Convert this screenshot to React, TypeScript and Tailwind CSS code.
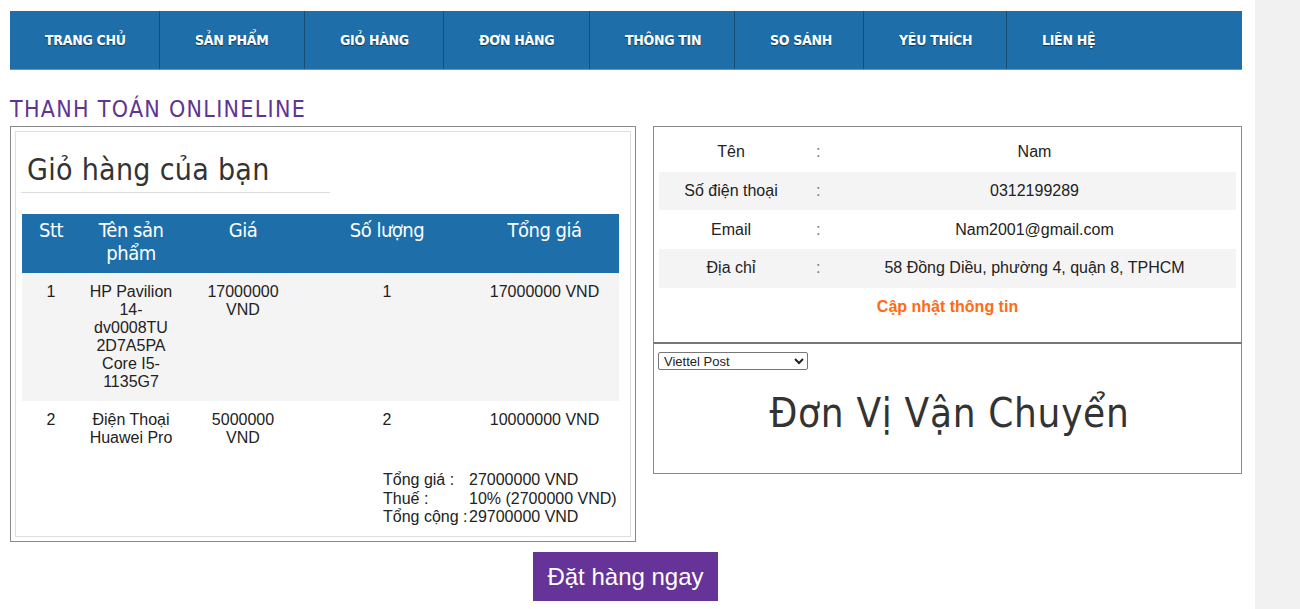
import React from "react";

const navItems = [
  { label: "TRANG CHỦ", w: "w-[150px]" },
  { label: "SẢN PHẨM", w: "w-[145px]" },
  { label: "GIỎ HÀNG", w: "w-[139px]" },
  { label: "ĐƠN HÀNG", w: "w-[146px]" },
  { label: "THÔNG TIN", w: "w-[145px]" },
  { label: "SO SÁNH", w: "w-[129px]" },
  { label: "YÊU THÍCH", w: "w-[143px]" },
  { label: "LIÊN HỆ", w: "w-[120px]" },
];

const info = [
  { k: "Tên", v: "Nam" },
  { k: "Số điện thoại", v: "0312199289" },
  { k: "Email", v: "Nam2001@gmail.com" },
  { k: "Địa chỉ", v: "58 Đồng Diều, phường 4, quận 8, TPHCM" },
];

export default function App() {
  return (
    <div className="flex min-h-[609px] bg-white font-['Liberation_Sans',Arial,sans-serif] text-[#222]">
      <div className="w-[1255px] pl-[10px] pt-[11px]">
        {/* nav */}
        <nav className="flex h-[59px] w-[1232px] bg-[#1e6fa9] border-b border-[#5b9ac8]">
          {navItems.map((n, i) => (
            <div
              key={n.label}
              className={`${n.w} flex items-center pl-[35px] pt-[1px] text-[14px] font-bold text-white [text-shadow:0_1px_1px_rgba(0,0,0,0.5)] font-['DejaVu_Sans_Condensed','DejaVu_Sans',sans-serif] tracking-[-0.3px] ${
                i < navItems.length - 1 ? "border-r border-[#164e78]" : ""
              }`}
            >
              {n.label}
            </div>
          ))}
        </nav>

        <h1 className="mt-[26px] text-[23px] leading-[26px] text-[#5e3591] font-['DejaVu_Sans_Condensed','DejaVu_Sans',sans-serif] tracking-[1.3px]">
          THANH TOÁN ONLINELINE
        </h1>

        <div className="flex gap-[17px] mt-[4px] items-start">
          {/* left */}
          <div className="w-[626px] h-[416px] border border-[#8a8a8a] p-[4px]">
            <div className="h-full border border-[#dedede] px-[5px] pt-[20px]">
              <h2 className="text-[30px] leading-[36px] text-[#333] pl-[6px] font-['DejaVu_Sans_Condensed','DejaVu_Sans',sans-serif] font-light tracking-[0.3px] w-[309px] pb-[4px] border-b border-[#dddddd]">
                Giỏ hàng của bạn
              </h2>
              <table className="mt-[21px] ml-[1px] w-[597px] border-collapse text-[16px] leading-[18px] table-fixed">
                <thead>
                  <tr className="bg-[#1e6fa9] text-white text-[20px] leading-[23px] font-['DejaVu_Sans_Condensed','Liberation_Sans',sans-serif] tracking-[-0.5px]">
                    <th className="w-[58px] font-normal align-top pt-[5px] pb-[8px]">Stt</th>
                    <th className="w-[102px] font-normal align-top pt-[5px] pb-[8px]">Tên sản phẩm</th>
                    <th className="w-[122px] font-normal align-top pt-[5px]">Giá</th>
                    <th className="w-[166px] font-normal align-top pt-[5px]">Số lượng</th>
                    <th className="font-normal align-top pt-[5px]">Tổng giá</th>
                  </tr>
                </thead>
                <tbody className="text-center align-top">
                  <tr className="bg-[#f4f4f4]">
                    <td className="pt-[10px] pb-[10px]">1</td>
                    <td className="pt-[10px] pb-[10px] px-[4px]">HP Pavilion 14-dv0008TU 2D7A5PA Core I5-1135G7</td>
                    <td className="pt-[10px] px-[14px]">17000000 VND</td>
                    <td className="pt-[10px]">1</td>
                    <td className="pt-[10px]">17000000 VND</td>
                  </tr>
                  <tr>
                    <td className="pt-[10px] pb-[24px]">2</td>
                    <td className="pt-[10px] px-[4px]">Điện Thoại Huawei Pro</td>
                    <td className="pt-[10px] px-[14px]">5000000 VND</td>
                    <td className="pt-[10px]">2</td>
                    <td className="pt-[10px]">10000000 VND</td>
                  </tr>
                </tbody>
              </table>
              <div className="ml-[362px] mt-[18px] text-[16px] leading-[18.5px]">
                <div className="flex">
                  <span className="w-[86px]">Tổng giá :</span>
                  <span>27000000 VND</span>
                </div>
                <div className="flex">
                  <span className="w-[86px]">Thuế :</span>
                  <span>10% (2700000 VND)</span>
                </div>
                <div className="flex">
                  <span className="w-[86px]">Tổng cộng :</span>
                  <span>29700000 VND</span>
                </div>
              </div>
            </div>
          </div>

          {/* right */}
          <div className="w-[589px]">
            <div className="h-[218px] border border-[#8a8a8a] border-b-2 border-b-[#777] px-[5px] pt-[6px]">
              {info.map((r, i) => (
                <div
                  key={r.k}
                  className={`flex h-[38.7px] items-center text-[16px] ${i % 2 === 1 ? "bg-[#f4f4f4]" : ""}`}
                >
                  <span className="w-[144px] text-center">{r.k}</span>
                  <span className="w-[30px] pl-[13px] text-[#777]">:</span>
                  <span className="flex-1 text-center">{r.v}</span>
                </div>
              ))}
              <div className="mt-[7px] text-center text-[16px] font-bold text-[#ff6a13]">
                Cập nhật thông tin
              </div>
            </div>
            <div className="h-[130px] border border-t-0 border-[#8a8a8a] pl-[4px] pt-[5px]">
              <select className="w-[150px] h-[18px] text-[13px] leading-[14px] border border-[#767676] rounded-[2px] bg-white px-[1px]">
                <option>Viettel Post</option>
                <option>Giao Hàng Nhanh</option>
                <option>Giao Hàng Tiết Kiệm</option>
              </select>
              <div className="mt-[16px] text-center text-[40px] leading-[48px] text-[#333] font-['DejaVu_Sans_Condensed','DejaVu_Sans',sans-serif] font-light tracking-[0.7px]">
                Đơn Vị Vận Chuyển
              </div>
            </div>
          </div>
        </div>

        <div className="flex mt-[10px]">
          <button className="ml-[523px] h-[49px] w-[185px] bg-[#663399] text-white text-[24px]">
            Đặt hàng ngay
          </button>
        </div>
      </div>
      <div className="w-[45px] bg-[#f1f1f1]" />
    </div>
  );
}
